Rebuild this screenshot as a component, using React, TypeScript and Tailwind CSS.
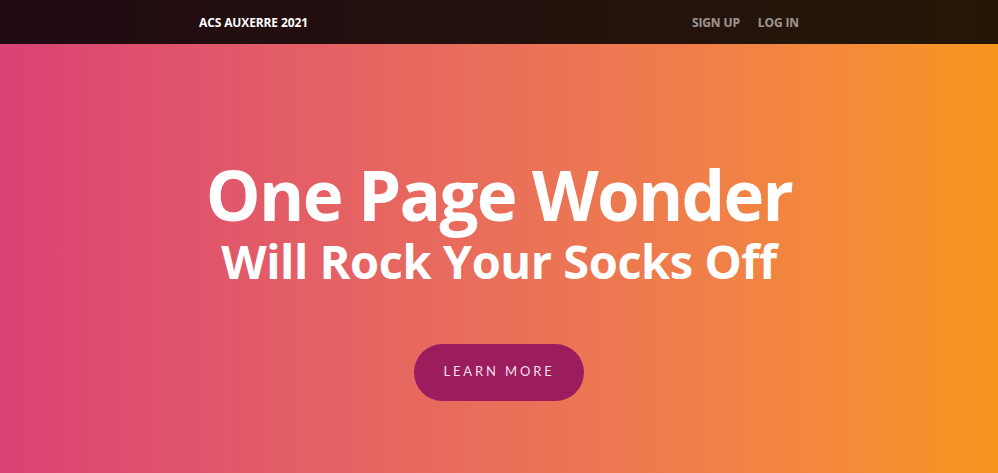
export default function App() {
  return (
    <div
      className="flex h-screen min-h-[473px] flex-col bg-gradient-to-r from-[#da4174] to-[#f8951b] text-white"
      style={{ fontFamily: '"Open Sans", "Liberation Sans", sans-serif' }}
    >
      <nav className="h-11 bg-black/[0.85]">
        <div className="mx-auto flex h-full max-w-[600px] items-center justify-between pt-px">
          <a className="text-[12px] font-bold tracking-[-0.01em] text-white">ACS AUXERRE 2021</a>
          <div className="flex gap-[18px] text-[12px] font-bold tracking-[-0.01em] text-white/55">
            <a>SIGN UP</a>
            <a>LOG IN</a>
          </div>
        </div>
      </nav>
      <header className="flex flex-col items-center pt-[113px] text-center">
        <h1 className="text-[69px] leading-[1.1] font-bold tracking-[-0.025em]">One Page Wonder</h1>
        <h2 className="mt-[3px] text-[47px] leading-[1.1] font-bold tracking-[-0.01em]">Will Rock Your Socks Off</h2>
        <a
          className="mt-[56px] flex h-[57px] w-[170px] items-center justify-center rounded-full bg-[#9b1d5e] text-[13px] tracking-[0.22em] text-[#f1dfe9]"
          style={{ fontFamily: 'Lato, "Liberation Sans", sans-serif' }}
        >
          LEARN MORE
        </a>
      </header>
    </div>
  );
}
